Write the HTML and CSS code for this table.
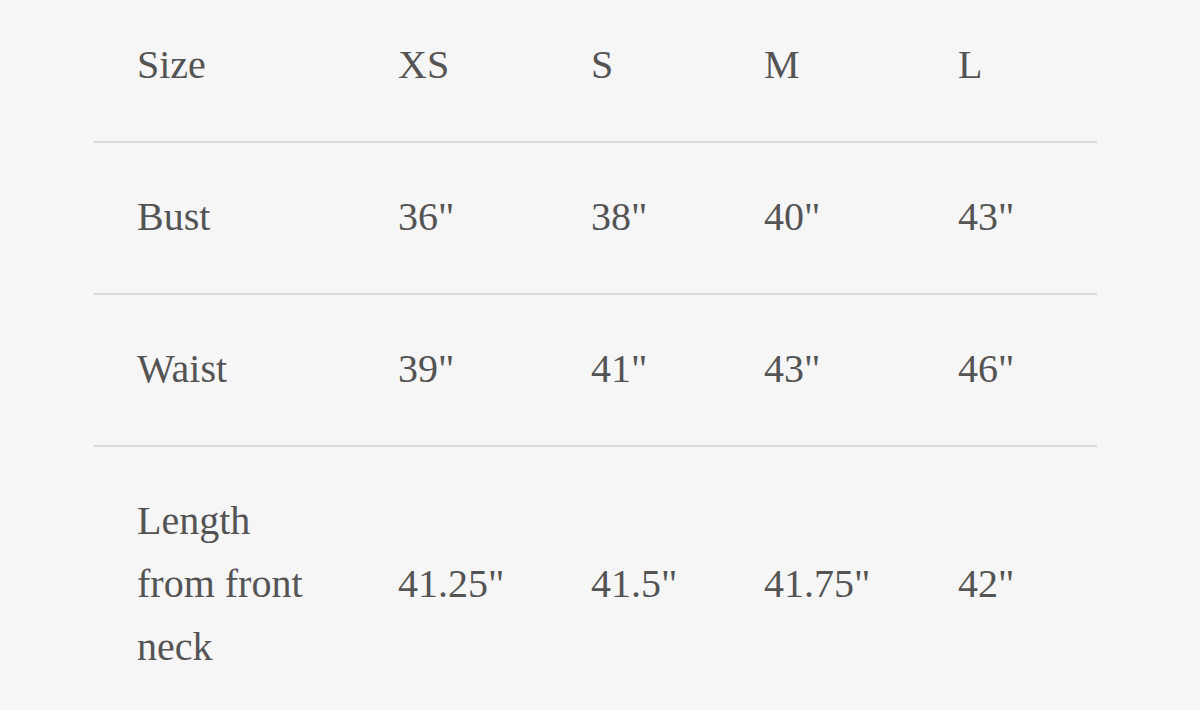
FILE: index.html
```html
<!DOCTYPE html>
<html lang="en">
<head>
<meta charset="utf-8">
<title>Size chart</title>
<link rel="stylesheet" href="styles.css">
</head>
<body>
<div class="page">
  <table class="size-table">
    <colgroup>
      <col class="c1"><col class="c2"><col class="c3"><col class="c4"><col class="c5">
    </colgroup>
    <tbody>
      <tr class="head"><td>Size</td><td>XS</td><td>S</td><td>M</td><td>L</td></tr>
      <tr><td>Bust</td><td>36"</td><td>38"</td><td>40"</td><td>43"</td></tr>
      <tr><td>Waist</td><td>39"</td><td>41"</td><td>43"</td><td>46"</td></tr>
      <tr><td>Length from front neck</td><td>41.25"</td><td>41.5"</td><td>41.75"</td><td>42"</td></tr>
    </tbody>
  </table>
</div>
</body>
</html>
```
FILE: styles.css
```css
html, body {
  margin: 0;
  padding: 0;
  background: #f6f6f6;
}
body {
  height: 710px;
  overflow: hidden;
}
.page {
  padding: 0 103px 0 94px;
  margin-top: -9px;
}
.size-table {
  width: 1003px;
  border-collapse: collapse;
  table-layout: fixed;
  font-family: "Liberation Serif", "Times New Roman", serif;
  font-size: 40px;
  line-height: 63px;
  color: #545454;
}
.c1 { width: 261px; }
.c2 { width: 193px; }
.c3 { width: 173px; }
.c4 { width: 194px; }
.c5 { width: 182px; }
.size-table td {
  padding: 42px 20px 45px 43px;
  vertical-align: middle;
  text-align: left;
  border-bottom: 2px solid #d9d9d9;
}
.size-table tr:last-child td {
  border-bottom: none;
}
```
